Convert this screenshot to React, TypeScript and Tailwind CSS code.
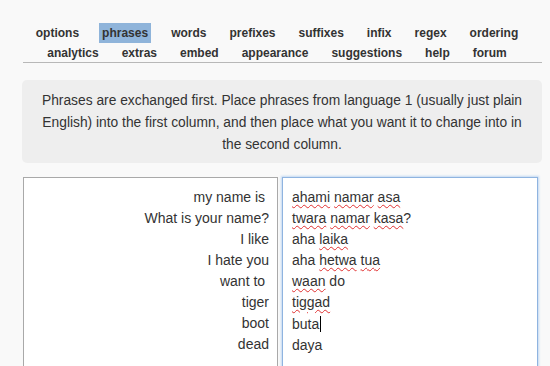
const topRow = ['options', 'phrases', 'words', 'prefixes', 'suffixes', 'infix', 'regex', 'ordering'];
const bottomRow = ['analytics', 'extras', 'embed', 'appearance', 'suggestions', 'help', 'forum'];

const left = ['my name is ', 'What is your name?', 'I like', 'I hate you', 'want to ', 'tiger', 'boot', 'dead'];

// each word: [text, misspelled]
const right: [string, boolean][][] = [
  [['ahami', true], [' ', false], ['namar', true], [' ', false], ['asa', true]],
  [['twara', true], [' ', false], ['namar', true], [' ', false], ['kasa', true], ['?', false]],
  [['aha ', false], ['laika', true]],
  [['aha ', false], ['hetwa', true], [' ', false], ['tua', true]],
  [['waan', true], [' do', false]],
  [['tiggad', true]],
  [['buta', false]],
  [['daya', false]],
];

function NavLink({ label, active }: { label: string; active?: boolean }) {
  return (
    <span className={`px-[3px] leading-[20px] ${active ? 'bg-[#8fb4da]' : ''}`}>{label}</span>
  );
}

export default function App() {
  return (
    <div className="min-h-[366px] w-[550px] overflow-hidden bg-[#f9f9f9] font-['Liberation_Sans',Arial,sans-serif] text-[#333]">
      <div className="ml-[23px] w-[519px] pt-[23px]">
        <nav className="border-b border-[#b8b8b8] pr-[11px] text-[12px] font-bold text-[#333]">
          <div className="flex h-[20px] justify-center gap-[17px]">
            {topRow.map((l) => (
              <NavLink key={l} label={l} active={l === 'phrases'} />
            ))}
          </div>
          <div className="flex h-[19px] justify-center gap-[17px]">
            {bottomRow.map((l) => (
              <NavLink key={l} label={l} />
            ))}
          </div>
        </nav>

        <div className="mt-[17px] ml-[-1px] rounded-[5px] bg-[#eeeeee] px-3 pt-[10px] pb-[7px] text-center text-[13.8px] leading-[22px] text-[#333]">
          Phrases are exchanged first. Place phrases from language 1 (usually just plain English) into the first column, and then
          place what you want it to change into in the second column.
        </div>

        <div className="mt-[14px] flex gap-[4px]">
          <div className="h-[200px] w-[255px] border border-[#a9a9a9] bg-white pt-[9px] pr-[8px] text-right text-[14px] leading-[21px] text-[#333]">
            {left.map((t, i) => (
              <div key={i} className="whitespace-pre">
                {t}
              </div>
            ))}
          </div>
          <div className="h-[200px] w-[256px] border border-[#8fb4e0] bg-white pt-[9px] pl-[9px] text-[14px] leading-[21px] text-[#333] shadow-[0_0_2px_1px_#c2d8f2]">
            {right.map((line, i) => (
              <div key={i} className="whitespace-pre">
                {line.map(([w, bad], j) => (
                  <span
                    key={j}
                    className={bad ? 'underline decoration-wavy decoration-[#e03030] decoration-1 underline-offset-[2px]' : ''}
                  >
                    {w}
                  </span>
                ))}
                {i === 6 && <span className="ml-[1px] inline-block h-[16px] w-px translate-y-[3px] bg-black" />}
              </div>
            ))}
          </div>
        </div>
      </div>
    </div>
  );
}
